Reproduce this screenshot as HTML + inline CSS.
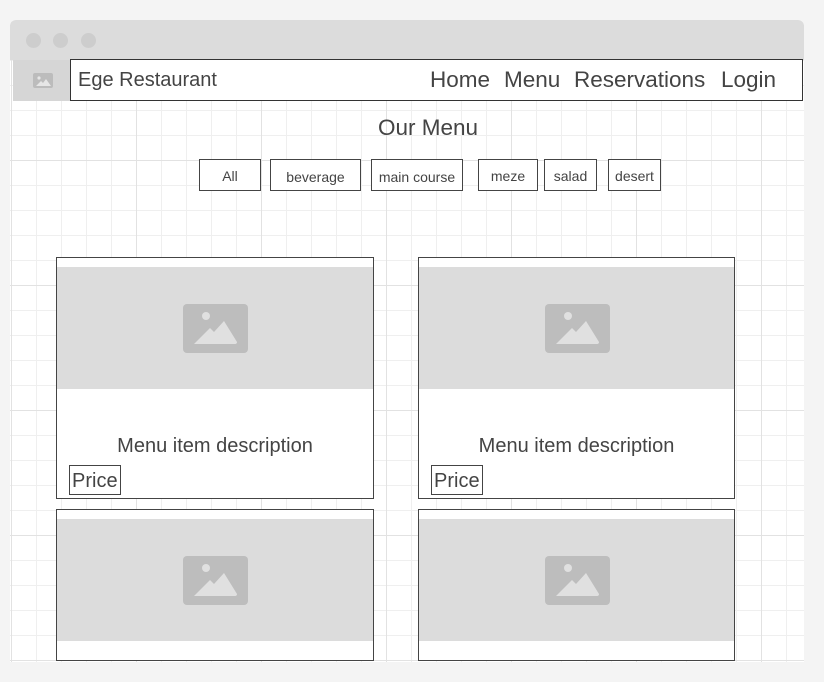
<!DOCTYPE html>
<html><head><style>
*{margin:0;padding:0;box-sizing:border-box}
body{width:824px;height:682px;background:#f4f4f4;font-family:"Liberation Sans",sans-serif;color:#444;position:relative;overflow:hidden}
.win{position:absolute;left:10px;top:20px;width:794px;height:642px;border-radius:6px 6px 0 0;overflow:hidden;
background-color:#fff;
background-image:linear-gradient(90deg,#e2e2e2 1px,transparent 1px),linear-gradient(#e2e2e2 1px,transparent 1px),linear-gradient(90deg,#efefef 1px,transparent 1px),linear-gradient(#efefef 1px,transparent 1px);
background-size:125px 125px,125px 125px,25px 25px,25px 25px;background-position:1px 15px,1px 15px,1px 15px,1px 15px}
.bar{position:absolute;left:0;top:0;width:794px;height:40px;background:#dcdcdc}
.dot{position:absolute;top:13px;width:15px;height:15px;border-radius:50%;background:#cdcdcd}
.a{position:absolute}
.nav{left:60px;top:39px;width:733px;height:42px;background:#fff;border:1px solid #333}
.nav b{position:absolute;top:7px;font-weight:normal;font-size:22.5px}
.logo{left:3px;top:40px;width:57px;height:41px;background:#d6d6d6}
.btn{position:absolute;top:139px;height:32px;border:1px solid #444;background:#fff;font-size:14px;text-align:center;line-height:32px}
.card{position:absolute;border:1px solid #444;background:#fff;width:318px}
.img{position:absolute;left:0;width:316px;height:122px;background:#dcdcdc}
.ic{position:absolute;left:126px;top:37px}
.price{position:absolute;left:12px;top:207px;height:30px;border:1px solid #444;font-size:20px;padding:4px 2px 0;line-height:22px}
</style></head><body>
<div class="win">
<div class="bar"></div>
<div class="dot" style="left:16px"></div><div class="dot" style="left:43px"></div><div class="dot" style="left:71px"></div>
<div class="a nav">
<span style="position:absolute;left:7px;top:9px;font-size:20px">Ege Restaurant</span>
<b style="left:359px">Home</b><b style="left:433px">Menu</b><b style="left:503px">Reservations</b><b style="left:650px">Login</b></div>
<div class="a logo"><svg style="position:absolute;left:20px;top:13px" width="20" height="15" viewBox="0 0 20 15"><rect width="20" height="15" rx="2" fill="#bcbcbc"/><circle cx="6" cy="5" r="1.6" fill="#e6e6e6"/><path d="M3 13 L8 8 L10 10 L13 6 L18 13Z" fill="#e6e6e6"/></svg></div>
<div class="a" style="left:368px;top:95px;font-size:22.5px">Our Menu</div>
<div class="btn" style="left:189px;width:62px">All</div>
<div class="btn" style="left:260px;width:91px;line-height:34px">beverage</div>
<div class="btn" style="left:361px;width:92px;line-height:34px">main course</div>
<div class="btn" style="left:468px;width:60px">meze</div>
<div class="btn" style="left:534px;width:53px">salad</div>
<div class="btn" style="left:598px;width:53px">desert</div>

<div class="card" style="left:46px;top:237px;height:242px"><div class="img" style="top:9px"><svg class="ic" width="65" height="49" viewBox="0 0 65 49"><rect width="65" height="49" rx="4" fill="#bdbdbd"/><circle cx="23" cy="12" r="4" fill="#e0e0e0"/><path d="M11 40 L27 24 L31 28 L41 17 L54 38 Q54 40 52 40 Z" fill="#e0e0e0"/></svg></div>
<div class="a" style="left:0;width:316px;top:177px;text-align:center;font-size:20px">Menu item description</div>
<div class="price">Price</div></div>
<div class="card" style="left:408px;top:237px;height:242px;width:317px"><div class="img" style="top:9px;width:315px"><svg class="ic" width="65" height="49" viewBox="0 0 65 49"><rect width="65" height="49" rx="4" fill="#bdbdbd"/><circle cx="23" cy="12" r="4" fill="#e0e0e0"/><path d="M11 40 L27 24 L31 28 L41 17 L54 38 Q54 40 52 40 Z" fill="#e0e0e0"/></svg></div>
<div class="a" style="left:0;width:315px;top:177px;text-align:center;font-size:20px">Menu item description</div>
<div class="price">Price</div></div>
<div class="card" style="left:46px;top:489px;height:152px"><div class="img" style="top:9px"><svg class="ic" width="65" height="49" viewBox="0 0 65 49"><rect width="65" height="49" rx="4" fill="#bdbdbd"/><circle cx="23" cy="12" r="4" fill="#e0e0e0"/><path d="M11 40 L27 24 L31 28 L41 17 L54 38 Q54 40 52 40 Z" fill="#e0e0e0"/></svg></div></div>
<div class="card" style="left:408px;top:489px;height:152px;width:317px"><div class="img" style="top:9px;width:315px"><svg class="ic" width="65" height="49" viewBox="0 0 65 49"><rect width="65" height="49" rx="4" fill="#bdbdbd"/><circle cx="23" cy="12" r="4" fill="#e0e0e0"/><path d="M11 40 L27 24 L31 28 L41 17 L54 38 Q54 40 52 40 Z" fill="#e0e0e0"/></svg></div></div>
</div>
</body></html>
